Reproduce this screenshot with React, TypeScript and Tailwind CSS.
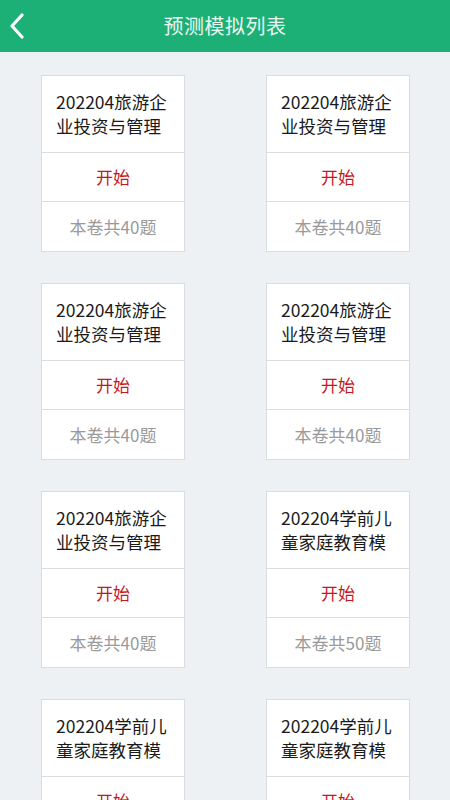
import React from "react";

type Paper = { title: string; count: number };

const papers: Paper[] = [
    { title: "202204旅游企业投资与管理", count: 40 },
    { title: "202204旅游企业投资与管理", count: 40 },
    { title: "202204旅游企业投资与管理", count: 40 },
    { title: "202204旅游企业投资与管理", count: 40 },
    { title: "202204旅游企业投资与管理", count: 40 },
    { title: "202204学前儿童家庭教育模", count: 50 },
    { title: "202204学前儿童家庭教育模", count: 50 },
    { title: "202204学前儿童家庭教育模", count: 50 },
];

const font = {
    fontFamily: '"Noto Sans CJK SC", "Noto Sans", sans-serif',
};

const PaperCard: React.FC<Paper> = ({ title, count }) => (
    <div className="bg-white border border-[#dadde0] flex flex-col">
        <div className="h-[77px] flex items-center px-[14px] border-b border-[#dadde0]">
            <p className="text-[17.5px] leading-[24px] text-[#1a1a1a] break-all">
                {title}
            </p>
        </div>
        <div className="h-[49px] flex items-center justify-center border-b border-[#dadde0] text-[17px] text-[#c8161e]">
            开始
        </div>
        <div className="h-[49px] flex items-center justify-center text-[17px] text-[#9a9a9a]">
            本卷共{count}题
        </div>
    </div>
);

export default function App() {
    return (
        <div className="w-[450px] h-[800px] overflow-hidden bg-[#edf1f3]" style={font}>
            <header className="h-[52px] bg-[#1cb077] flex items-center relative">
                <svg
                    className="absolute left-[9px] top-[13px]"
                    width="16"
                    height="26"
                    viewBox="0 0 16 26"
                    fill="none"
                >
                    <path
                        d="M13 2 L3 13 L13 24"
                        stroke="#fff"
                        strokeWidth="3.2"
                        strokeLinecap="round"
                        strokeLinejoin="round"
                    />
                </svg>
                <h1 className="flex-1 text-center text-[20px] text-[#eaf7f0] tracking-[0.5px]">
                    预测模拟列表
                </h1>
            </header>
            <main className="grid grid-cols-2 gap-x-[81px] gap-y-[31px] pl-[41px] pr-[40px] pt-[23px]">
                {papers.map((p, i) => (
                    <PaperCard key={i} {...p} />
                ))}
            </main>
        </div>
    );
}
